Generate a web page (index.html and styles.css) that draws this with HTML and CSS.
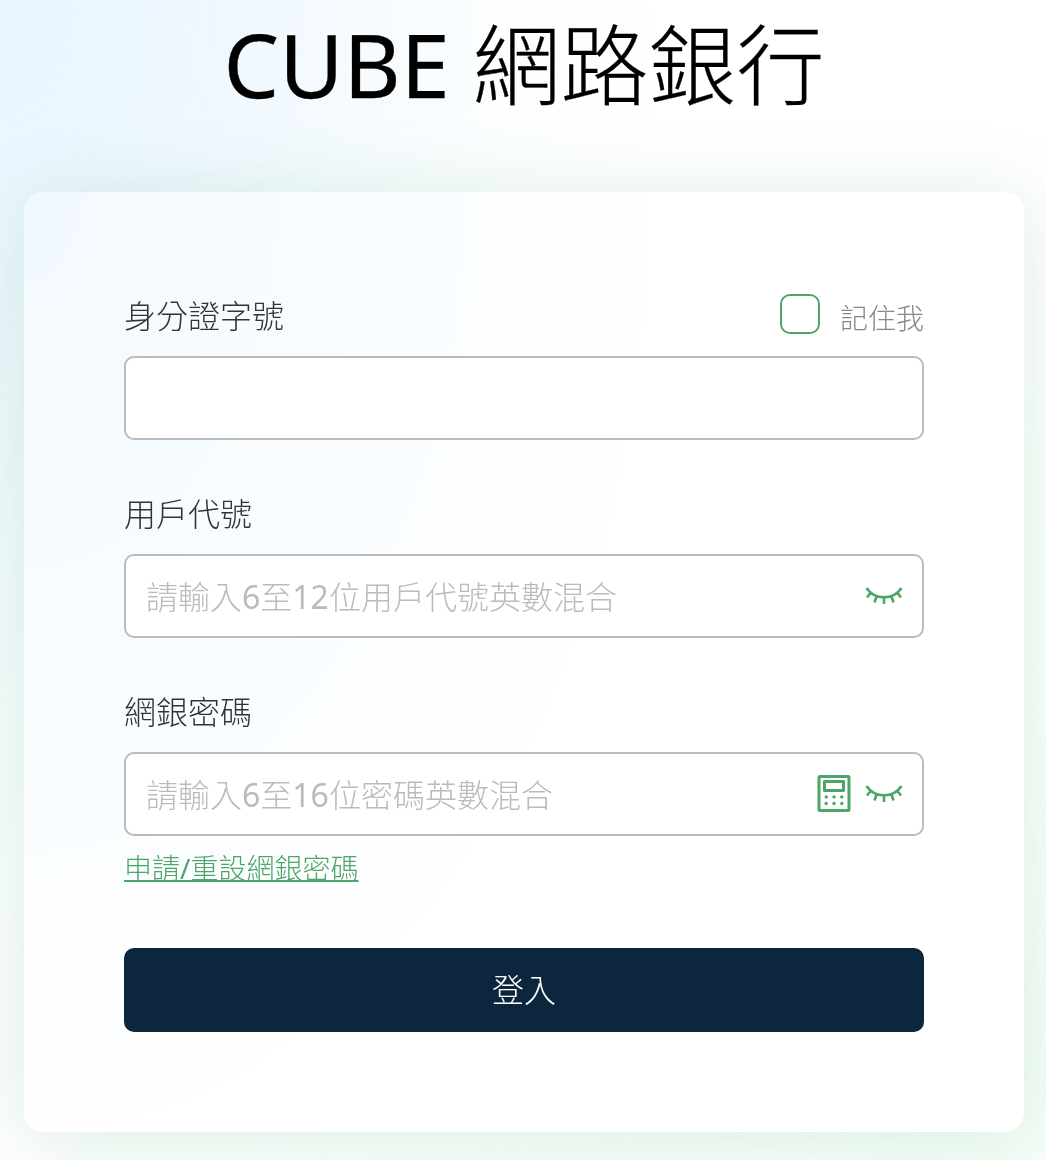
FILE: index.html
```html
<!DOCTYPE html>
<html lang="zh-Hant">
<head>
<meta charset="utf-8">
<title>CUBE 網路銀行</title>
<link rel="stylesheet" href="styles.css">
</head>
<body>
<main class="page">
  <h1 class="title">CUBE 網路銀行</h1>
  <form class="card">
    <div class="field">
      <div class="label-row">
        <label class="label" for="id">身分證字號</label>
        <label class="remember"><input class="checkbox" type="checkbox"><span class="remember-text">記住我</span></label>
      </div>
      <div class="box"><input class="input" id="id" type="text"></div>
    </div>
    <div class="field">
      <div class="label-row"><label class="label" for="user">用戶代號</label></div>
      <div class="box">
        <input class="input" id="user" type="text" placeholder="請輸入6至12位用戶代號英數混合">
        <svg class="eye" viewBox="0 0 40 40"><path d="M2.500 12C11 24.500 29 24.500 37.500 12M7 16.500L3 21.500M12.500 20.500L10.500 26.500M20 21.500V28M27.500 20.500L29.500 26.500M33 16.500L37 21.500"/></svg>
      </div>
    </div>
    <div class="field">
      <div class="label-row"><label class="label" for="pass">網銀密碼</label></div>
      <div class="box">
        <input class="input" id="pass" type="text" placeholder="請輸入6至16位密碼英數混合">
        <svg class="keypad" viewBox="0 0 40 40"><rect x="5" y="2.500" width="30" height="34" rx="1"/><rect x="10.500" y="7.500" width="19" height="9"/><path class="keys" d="M12.200 22.900h.01M20 22.900h.01M27.800 22.900h.01M12.200 29.500h.01M20 29.500h.01M27.800 29.500h.01"/></svg>
        <svg class="eye" viewBox="0 0 40 40"><path d="M2.500 12C11 24.500 29 24.500 37.500 12M7 16.500L3 21.500M12.500 20.500L10.500 26.500M20 21.500V28M27.500 20.500L29.500 26.500M33 16.500L37 21.500"/></svg>
      </div>
    </div>
    <a class="reset" href="#">申請/重設網銀密碼</a>
    <button class="submit" type="button">登入</button>
  </form>
</main>
</body>
</html>
```
FILE: styles.css
```css
* { box-sizing: border-box; }
body {
  margin: 0;
  font-family: "Noto Sans", "Noto Sans CJK TC Light", "Noto Sans CJK TC", sans-serif;
  font-weight: 400;
  font-size: 32px;
  color: #333;
}
.page {
  height: 1160px;
  overflow: hidden;
  padding: 0 22px 0 24px;
  will-change: transform;
  background:
    radial-gradient(ellipse 660px 1120px at 0 0, #e8f5ff 0%, rgba(240, 248, 255, .9) 40%, rgba(250, 253, 255, .5) 78%, rgba(255, 255, 255, 0) 100%),
    radial-gradient(ellipse 800px 800px at 100% 100%, #f7fef8 0%, rgba(250, 255, 251, .8) 50%, rgba(255, 255, 255, 0) 100%);
}
.title {
  height: 192px;
  margin: 0;
  padding-top: 4px;
  font-size: 88px;
  line-height: 120px;
  font-weight: 400;
  text-align: center;
  white-space: nowrap;
  color: #000;
  -webkit-text-stroke: .3px #000;
}
.card {
  display: flex;
  flex-direction: column;
  align-items: stretch;
  height: 940px;
  padding: 100px;
  border-radius: 20px;
  background: radial-gradient(ellipse 640px 960px at 0 0, #f2f9fe 0%, #f8fcff 50%, #fff 100%);
  box-shadow: 0 8px 80px rgba(76, 166, 103, .2);
}
.field { margin-bottom: 50px; }
.field:nth-of-type(3) { margin-bottom: 12px; }
.label-row {
  display: flex;
  justify-content: space-between;
  height: 64px;
}
.label { line-height: 48px; }
.remember {
  display: flex;
  align-items: flex-start;
  gap: 20px;
  padding-top: 2px;
}
.checkbox {
  appearance: none;
  width: 40px;
  height: 40px;
  margin: 0;
  border: 2px solid #4ca667;
  border-radius: 10px;
  background: #fff;
}
.remember-text {
  font-size: 28px;
  line-height: 48px;
  color: #888;
}
.box {
  display: flex;
  align-items: center;
  height: 84px;
  padding: 0 18px 0 20px;
  border: 2px solid #bbb;
  border-radius: 10px;
  background: #fff;
}
.input {
  flex: 1;
  min-width: 0;
  height: 60px;
  padding: 0;
  border: 0;
  outline: 0;
  background: transparent;
  font: inherit;
  color: #333;
}
.input::placeholder { color: #bbb; opacity: 1; }
.eye, .keypad {
  flex: none;
  width: 40px;
  height: 40px;
  fill: none;
  stroke: #4ca667;
  stroke-width: 2.6;
}
.keypad { margin-right: 10px; stroke-width: 3; stroke-linejoin: round; }
.keys { stroke-linecap: round; stroke-width: 3.4; }
.reset {
  align-self: flex-start;
  margin-bottom: 60px;
  font-size: 28px;
  line-height: 40px;
  color: #4ca667;
  text-decoration-thickness: 2px;
}
.submit {
  height: 84px;
  padding: 0 0 4px;
  border: 0;
  border-radius: 10px;
  background: #0c273d;
  font: inherit;
  color: #fff;
}
```
